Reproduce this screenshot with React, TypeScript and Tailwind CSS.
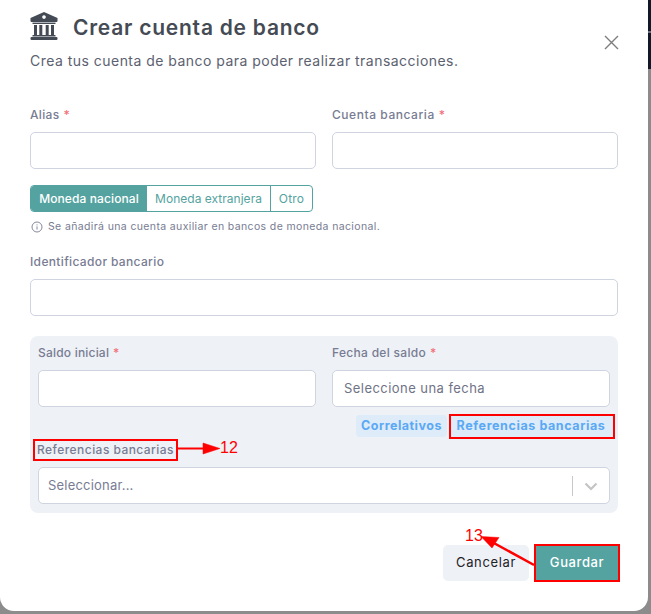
import React from "react";

const Label = ({ text, req, track }: { text: string; req?: boolean; track: string }) => (
  <label className={`flex h-[18px] items-center text-[12px] font-medium text-[#787c93] ${track}`}>
    {text}
    {req && <span className="ml-1 text-[#f1707a]">*</span>}
  </label>
);

export default function App() {
  return (
    <div className="relative flex h-[614px] w-[651px] items-start overflow-hidden bg-[#8c8c8c] font-['Inter','Liberation_Sans',sans-serif]">
      <div className="relative h-[611px] w-[648px] shrink-0 rounded-b-[14px] bg-white px-[30px] pt-[12px]">
        <div className="flex h-[28px] items-center gap-[16px]">
          <svg width="28" height="28" viewBox="0 0 28 28" className="shrink-0 text-[#454b54]" fill="currentColor">
            <path fillRule="evenodd" d="M14 0 L27.5 6 V9 Q27.5 10 26.5 10 H1.5 Q0.5 10 0.5 9 V6 Z M14 3.2 a1.8 1.8 0 1 0 0.01 0 Z" />
            <rect x="2.5" y="10.6" width="23" height="1.4" />
            <rect x="4" y="13" width="3" height="10" />
            <rect x="9.3" y="13" width="3" height="10" />
            <rect x="15.7" y="13" width="3" height="10" />
            <rect x="21" y="13" width="3" height="10" />
            <rect x="2.5" y="23" width="23" height="1.5" />
            <rect x="0.5" y="25" width="27" height="3" rx="1" />
          </svg>
          <h1 className="-ml-px mt-[2px] text-[21px] font-semibold leading-none tracking-[0.76px] text-[#454b54]">Crear cuenta de banco</h1>
        </div>
        <p className="mt-[11px] h-[20px] text-[14px] leading-[20px] tracking-[0.47px] text-[#5c6170]">
          Crea tus cuenta de banco para poder realizar transacciones.
        </p>

        <div className="mt-[35px] grid grid-cols-2 gap-4">
          <div className="flex flex-col gap-[8px]">
            <Label text="Alias" req track="tracking-[0.35px]" />
            <div className="h-[37px] rounded-[5px] border border-[#cfd4e0] bg-white" />
          </div>
          <div className="flex flex-col gap-[8px]">
            <Label text="Cuenta bancaria" req track="tracking-[0.55px]" />
            <div className="h-[37px] rounded-[5px] border border-[#cfd4e0] bg-white" />
          </div>
        </div>

        <div className="mt-[16px] flex h-[27px] w-[283px] overflow-hidden rounded-[4px] border border-[#54a3a0] text-[12px] text-[#54a3a0]">
          <div className="flex w-[116px] items-center justify-center bg-[#54a3a0] font-medium tracking-[0.1px] text-white">Moneda nacional</div>
          <div className="flex w-[124px] items-center justify-center border-r border-[#54a3a0] tracking-[0.02px]">Moneda extranjera</div>
          <div className="flex flex-1 items-center justify-center tracking-[0.2px]">Otro</div>
        </div>

        <div className="mt-[8px] flex h-[14px] items-center gap-[5px] text-[10.5px] tracking-[0.37px] text-[#787c93]">
          <svg width="12" height="12" viewBox="0 0 12 12" fill="none" stroke="#787c93" strokeWidth="0.9" className="ml-px shrink-0">
            <circle cx="6" cy="6" r="5" />
            <path d="M6 5.4 V8.6 M6 3.4 V4.4" />
          </svg>
          Se añadirá una cuenta auxiliar en bancos de moneda nacional.
        </div>

        <div className="mt-[19px] flex flex-col gap-[8px]">
          <Label text="Identificador bancario" track="tracking-[0.35px]" />
          <div className="h-[37px] rounded-[5px] border border-[#cfd4e0] bg-white" />
        </div>

        <div className="mt-[20px] h-[177px] rounded-[8px] bg-[#eef1f6] px-[8px] pt-[8px]">
          <div className="grid grid-cols-2 gap-4">
            <div className="flex flex-col gap-[8px]">
              <Label text="Saldo inicial" req track="tracking-[0.2px]" />
              <div className="h-[37px] rounded-[5px] border border-[#cfd4e0] bg-white" />
            </div>
            <div className="flex flex-col gap-[8px]">
              <Label text="Fecha del saldo" req track="tracking-[0.3px]" />
              <div className="flex h-[37px] items-center rounded-[5px] border border-[#cfd4e0] bg-white pl-[11px] text-[13px] tracking-[0.45px] text-[#6f7386]">
                Seleccione una fecha
              </div>
            </div>
          </div>
          <div className="-mr-[3px] mt-[8px] flex h-[22px] items-center justify-end gap-[4px] text-[12.5px] font-bold text-[#5aa9f5]">
            <button className="flex h-[22px] w-[91px] items-center justify-center rounded-[4px] bg-[#deebf8] tracking-[0.5px]">Correlativos</button>
            <button className="flex h-[21px] w-[162px] items-center justify-center bg-[#deebf8] pr-[2px] tracking-[0.6px] outline-[2.5px] outline-[#ff0000]">Referencias bancarias</button>
          </div>
          <div className="mt-[4px]">
            <div className="-ml-[3px] flex h-[18px] w-max items-center px-[2px] text-[12px] font-medium tracking-[0.45px] text-[#787c93] outline-[2.5px] outline-[#ff0000]">
              Referencias bancarias
            </div>
            <div className="mt-[8px] flex h-[37px] items-center rounded-[5px] border border-[#cfd4e0] bg-white pl-[9px] text-[13px] tracking-[0.2px] text-[#787c93]">
              <span className="flex-1">Seleccionar...</span>
              <span className="h-[20px] w-px bg-[#c8c8c8]" />
              <svg width="36" height="20" viewBox="0 0 36 20" fill="none" stroke="#c4c4c4" strokeWidth="2.2">
                <path d="M12.5 7.5 L18 13 L23.5 7.5" />
              </svg>
            </div>
          </div>
        </div>

        <div className="mt-[32px] flex items-center justify-end gap-[7px]">
          <button className="flex h-[36px] w-[86px] items-center justify-center rounded-[5px] bg-[#eef1f6] text-[13px] tracking-[0.65px] text-[#1e2128]">
            Cancelar
          </button>
          <button className="flex h-[34px] w-[82px] items-center justify-center bg-[#54a3a0] text-[13px] font-medium tracking-[0.6px] text-white outline-[2.5px] outline-[#ff0000]">
            Guardar
          </button>
        </div>

        <button className="absolute right-[29px] top-[35px]" aria-label="Cerrar">
          <svg width="15" height="15" viewBox="0 0 15 15" fill="none" stroke="#7d7d7d" strokeWidth="1.4" className="block">
            <path d="M1 1 L14 14 M14 1 L1 14" />
          </svg>
        </button>

        <span className="absolute left-[220px] top-[438px] font-['Liberation_Sans',sans-serif] text-[16px] leading-[20px] text-[#ff0000]">12</span>
        <span className="absolute left-[465px] top-[526px] font-['Liberation_Sans',sans-serif] text-[16px] leading-[20px] text-[#ff0000]">13</span>
        <svg width="648" height="611" viewBox="0 0 648 611" className="pointer-events-none absolute left-0 top-0" fill="#ff0000" stroke="#ff0000">
          <path d="M177 448.5 H205" strokeWidth="2" />
          <path d="M203 443 L220 448.5 L203 454 Z" strokeWidth="0.5" />
          <path d="M534 565 L492 542" strokeWidth="2.5" />
          <path d="M481 536.5 L499 537.5 L492 548 Z" strokeWidth="0.5" />
        </svg>
      </div>
      <div className="flex w-[3px] flex-col">
        <div className="h-[31px] bg-[#111827]" />
        <div className="h-[2px] bg-[#6b7280]" />
        <div className="h-[36px] bg-[#111827]" />
      </div>
    </div>
  );
}
